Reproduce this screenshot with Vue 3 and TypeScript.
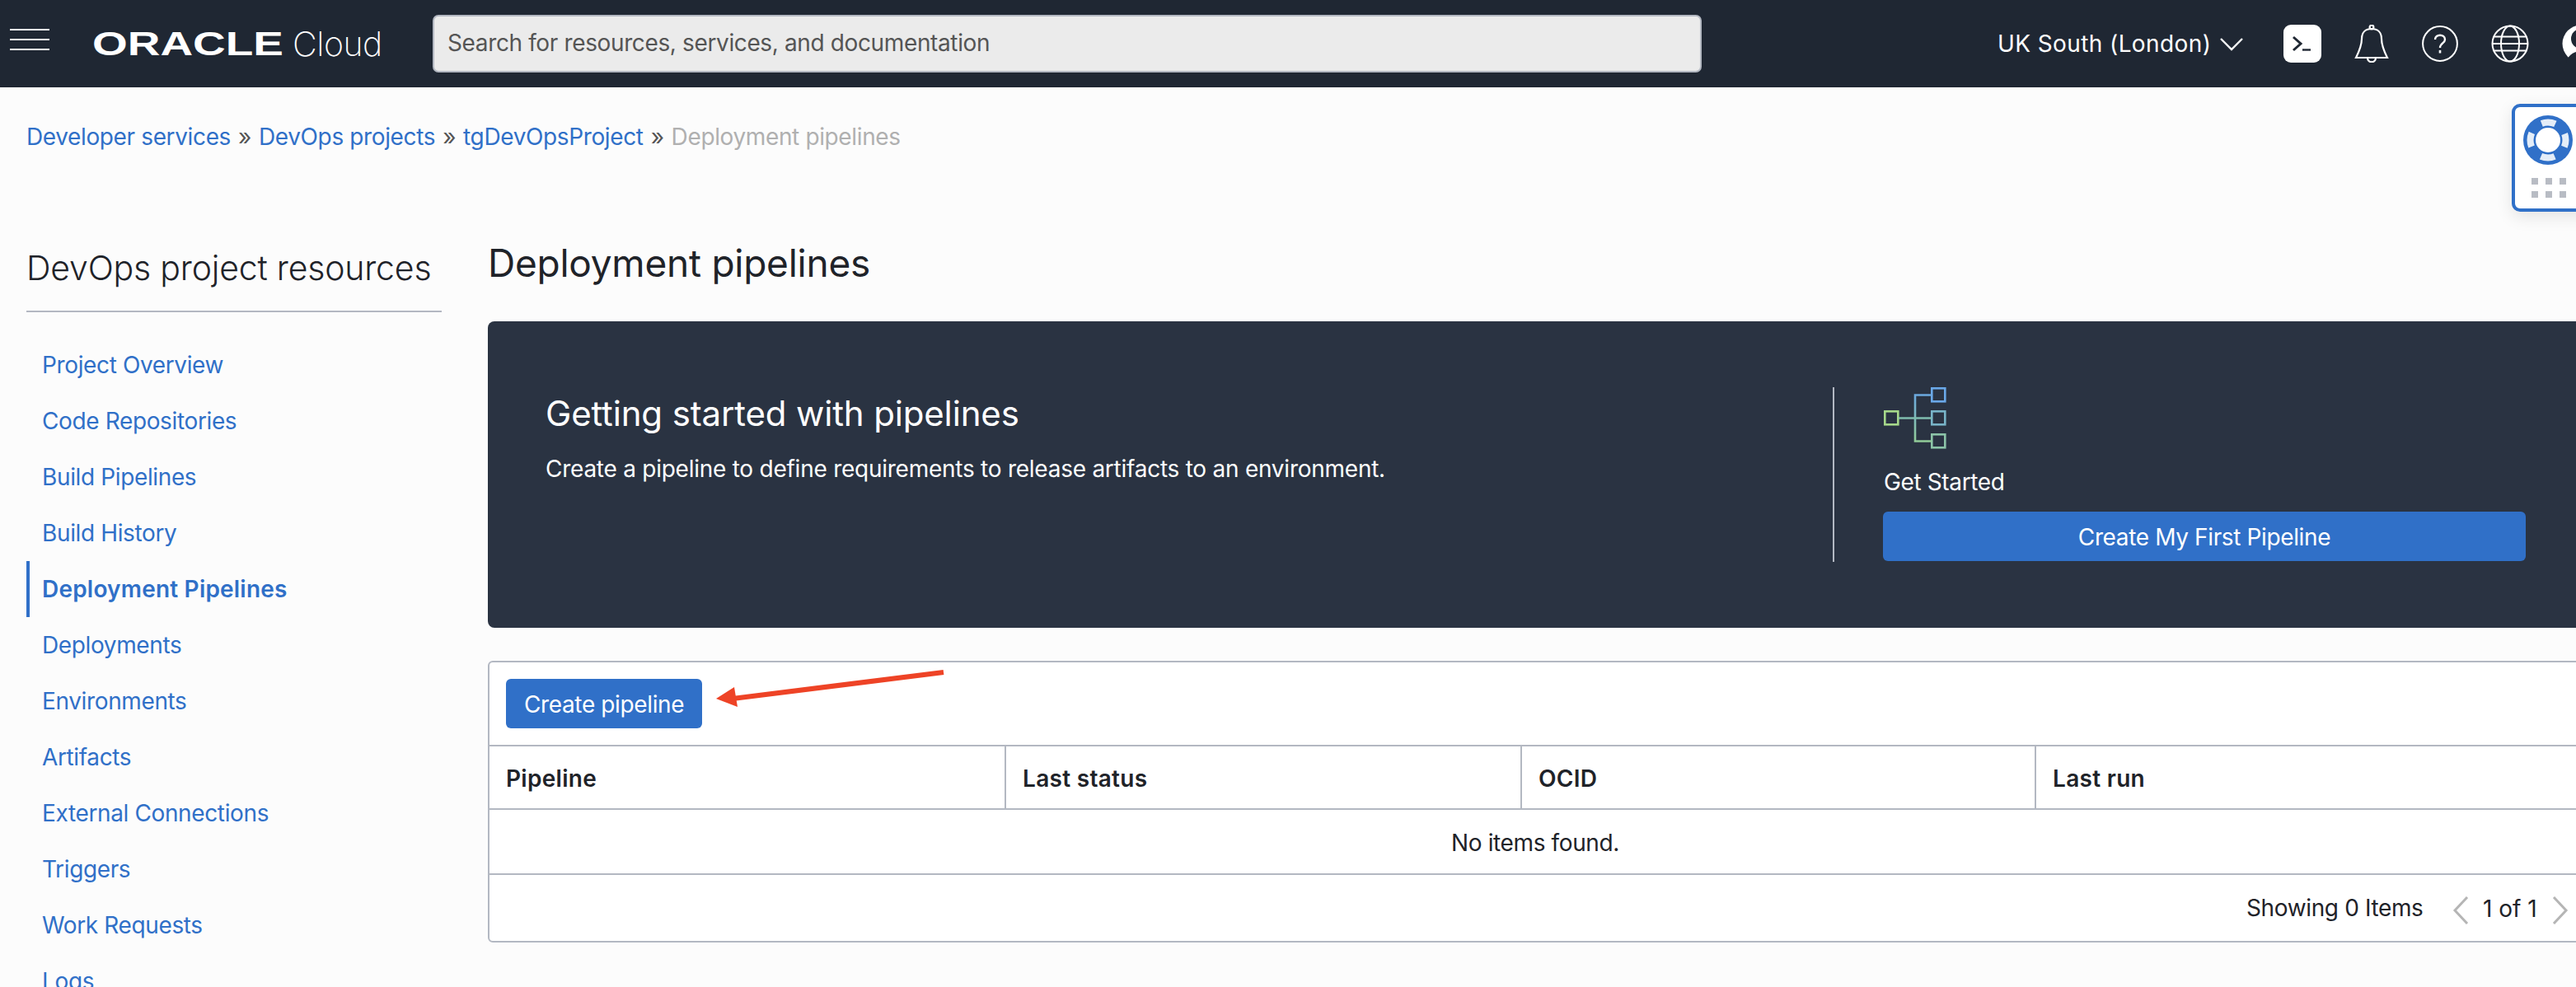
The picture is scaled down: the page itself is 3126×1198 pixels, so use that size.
<script setup lang="ts">
const crumbs = ['Developer services', 'DevOps projects', 'tgDevOpsProject']

const navItems = [
  'Project Overview',
  'Code Repositories',
  'Build Pipelines',
  'Build History',
  'Deployment Pipelines',
  'Deployments',
  'Environments',
  'Artifacts',
  'External Connections',
  'Triggers',
  'Work Requests',
  'Logs',
]
const activeNav = 'Deployment Pipelines'

const columns = ['Pipeline', 'Last status', 'OCID', 'Last run']
</script>

<template>
  <div class="page">
    <header class="topbar">
      <div class="menu-btn"><span></span><span></span><span></span></div>
      <div class="brand">
        <span class="brand-oracle">ORACLE</span>
        <span class="brand-cloud">Cloud</span>
      </div>
      <div class="search">Search for resources, services, and documentation</div>
      <div class="region">
        UK South (London)
        <svg class="region-chev" width="28" height="16" viewBox="0 0 28 16" fill="none" stroke="#fff" stroke-width="2.4"><path d="M1 1l13 13L27 1" /></svg>
      </div>
      <div class="tools">
        <svg width="46" height="46" viewBox="0 0 46 46">
          <rect width="46" height="46" rx="9" fill="#fff" />
          <path d="M12 15l9 8-9 8" fill="none" stroke="#1f2733" stroke-width="3" />
          <path d="M23 30.500h10" fill="none" stroke="#1f2733" stroke-width="2.400" />
        </svg>
        <svg width="42" height="46" viewBox="0 0 42 46" fill="none" stroke="#fff" stroke-width="2.2">
          <path d="M2 40C7 30 9 24 9 17 9 9 14 5 21 5s12 4 12 12c0 7 2 13 7 23z" />
          <circle cx="21" cy="3" r="2.400" />
          <path d="M16 40c0 7 10 7 10 0" />
        </svg>
        <svg width="44" height="44" viewBox="0 0 44 44" fill="none" stroke="#fff" stroke-width="2">
          <circle cx="22" cy="22" r="20.900" />
          <path d="M16 17c0-7 12-7 12 0 0 4.500-6 4.500-6 10" stroke-width="2.400" />
          <path d="M22 30v3.500" stroke-width="2.600" />
        </svg>
        <svg width="46" height="46" viewBox="0 0 46 46" fill="none" stroke="#fff" stroke-width="2">
          <circle cx="23" cy="23" r="21.500" />
          <ellipse cx="23" cy="23" rx="11" ry="21.500" />
          <path d="M4 14.500h38M1.500 23h43M4 31.500h38" />
        </svg>
        <svg width="46" height="46" viewBox="0 0 46 46">
          <circle cx="23" cy="23" r="22.500" fill="#fff" />
          <circle cx="23" cy="17" r="12" fill="#1f2733" />
          <ellipse cx="23" cy="48" rx="18" ry="16" fill="#1f2733" />
        </svg>
      </div>
    </header>

    <nav class="crumbs">
      <template v-for="c in crumbs" :key="c">
        <a class="crumb-link">{{ c }}</a>
        <span class="crumb-sep">»</span>
      </template>
      <span class="crumb-current">Deployment pipelines</span>
    </nav>

    <div class="body-row">
      <aside class="sidebar">
        <h2 class="side-title">DevOps project resources</h2>
        <ul class="side-nav">
          <li v-for="item in navItems" :key="item" :class="{ active: item === activeNav }">{{ item }}</li>
        </ul>
      </aside>

      <main class="main">
        <h1 class="page-title">Deployment pipelines</h1>

        <section class="banner">
          <div class="banner-left">
            <h2>Getting started with pipelines</h2>
            <p>Create a pipeline to define requirements to release artifacts to an environment.</p>
          </div>
          <div class="banner-right">
            <svg class="pipeline-icon" width="76" height="76" viewBox="0 0 76 76" fill="none" stroke-width="2.6">
              <defs>
                <linearGradient id="spine" gradientUnits="userSpaceOnUse" x1="38" y1="8" x2="38" y2="66">
                  <stop offset="0" stop-color="#6aa8e0" />
                  <stop offset="1" stop-color="#92cc98" />
                </linearGradient>
              </defs>
              <rect x="1.300" y="29.300" width="16" height="16" stroke="#a6d88a" />
              <rect x="58.300" y="1.300" width="16" height="16" stroke="#6aa8e8" />
              <rect x="58.300" y="29.300" width="16" height="16" stroke="#78b4c8" />
              <rect x="58.300" y="57.300" width="16" height="16" stroke="#8cc4a8" />
              <path d="M58 9.500H38v56h20" stroke="url(#spine)" />
              <path d="M18 37.500h40" stroke="#7fbcae" />
            </svg>
            <div class="get-started">Get Started</div>
            <button class="btn btn-wide">Create My First Pipeline</button>
          </div>
        </section>

        <section class="panel">
          <div class="panel-tools">
            <button class="btn">Create pipeline</button>
          </div>
          <div class="grid-head">
            <div v-for="col in columns" :key="col" class="grid-cell">{{ col }}</div>
          </div>
          <div class="grid-empty">No items found.</div>
          <div class="panel-foot">
            <span class="showing">Showing 0 Items</span>
            <svg class="pager-chev" width="20" height="34" viewBox="0 0 20 34" fill="none" stroke="#b5b5b5" stroke-width="3"><path d="M18 1L3 17l15 16" /></svg>
            <span class="pager-text">1 of 1</span>
            <svg class="pager-chev" width="20" height="34" viewBox="0 0 20 34" fill="none" stroke="#b5b5b5" stroke-width="3"><path d="M2 1l15 16L2 33" /></svg>
          </div>
        </section>
      </main>
    </div>

    <!-- annotation drawn on top of the screenshot -->
    <svg class="annotation" width="290" height="50" viewBox="0 0 290 50">
      <path d="M276 3L20 35" stroke="#ee4326" stroke-width="6" fill="none" />
      <path d="M0 35l22-14 4 24z" fill="#ee4326" />
    </svg>

    <div class="help-tab">
      <svg width="60" height="60" viewBox="0 0 60 60">
        <circle cx="30" cy="30" r="30" fill="#3070c8" />
        <circle cx="30" cy="30" r="21.500" fill="none" stroke="#e4edf8" stroke-width="8" stroke-dasharray="17 16.770" stroke-dashoffset="8.500" />
        <circle cx="30" cy="30" r="15" fill="#fff" />
      </svg>
      <div class="help-dots"><i></i><i></i><i></i><i></i><i></i><i></i></div>
    </div>
  </div>
</template>

<style scoped>
.page {
  position: relative;
  width: 3126px;
  height: 1198px;
  overflow: hidden;
  background: #fcfcfc;
  font-family: Inter, "Liberation Sans", sans-serif;
  font-size: 28px;
  letter-spacing: -0.37px;
  color: #1f2329;
}

.topbar {
  display: flex;
  align-items: center;
  height: 106px;
  background: #1f2733;
  color: #fff;
  padding-left: 12px;
}
.topbar > * {
  flex-shrink: 0;
}
.menu-btn {
  display: flex;
  flex-direction: column;
  gap: 10px;
  width: 48px;
  margin-top: -11px;
}
.menu-btn span {
  height: 2px;
  background: #fff;
}
.brand {
  display: flex;
  align-items: center;
  width: 413px;
  margin-left: 52px;
}
.brand-oracle {
  font-family: "Liberation Sans", sans-serif;
  font-weight: 700;
  font-size: 41px;
  letter-spacing: 0;
  width: 243px;
  transform-origin: left center;
  transform: scaleX(1.34);
  line-height: 1;
}
.brand-cloud {
  font-weight: 200;
  font-size: 41px;
  letter-spacing: -0.5px;
  line-height: 1;
}
.search {
  width: 1540px;
  height: 70px;
  box-sizing: border-box;
  display: flex;
  align-items: center;
  padding: 0 0 2px 16px;
  background: #ebebeb;
  border: 2px solid #b3b8c2;
  border-radius: 7px;
  color: #555;
}
.region {
  display: flex;
  align-items: center;
  gap: 11px;
  margin-left: 359px;
  white-space: nowrap;
  letter-spacing: 0.4px;
}
.region-chev {
  margin-top: 2px;
}
.tools {
  display: flex;
  align-items: center;
  gap: 40px;
  margin-left: 49px;
}
.tools svg {
  flex-shrink: 0;
}

.crumbs {
  display: flex;
  gap: 9px;
  padding: 42px 0 0 32px;
  height: 64px;
  line-height: 36px;
  box-sizing: content-box;
}
.crumb-link { color: #3070c8; }
.crumb-sep { color: #555; }
.crumb-current { color: #b0b0b0; }

.body-row {
  display: flex;
  padding: 80px 0 0 32px;
}
.sidebar {
  width: 504px;
  flex-shrink: 0;
}
.side-title {
  margin: 0;
  height: 85px;
  font-size: 41px;
  font-weight: 300;
  line-height: 66px;
  letter-spacing: -0.2px;
  color: #1f2329;
  border-bottom: 2px solid #b3b8c2;
  white-space: nowrap;
}
.side-nav {
  list-style: none;
  margin: 30px 0 0;
  padding: 0;
}
.side-nav li {
  height: 68px;
  line-height: 68px;
  padding-left: 19px;
  color: #3070c8;
}
.side-nav li.active {
  padding-left: 15px;
  border-left: 4px solid #3070c8;
  font-weight: 600;
  letter-spacing: 0.2px;
}

.main {
  width: 2542px;
  flex-shrink: 0;
  margin-left: 56px;
}
.page-title {
  margin: 0;
  height: 98px;
  font-size: 46px;
  font-weight: 400;
  line-height: 54px;
  letter-spacing: -0.25px;
  color: #1f2329;
}
.banner {
  display: flex;
  height: 372px;
  box-sizing: border-box;
  padding: 80px 68px 80px 70px;
  background: #2a3342;
  border-radius: 8px;
  color: #fff;
}
.banner-left {
  flex: 1;
}
.banner-left h2 {
  margin: 6px 0 0;
  font-size: 42px;
  font-weight: 400;
  line-height: 52px;
  letter-spacing: -0.15px;
}
.banner-left p {
  margin: 21px 0 0;
  line-height: 40px;
  letter-spacing: -0.25px;
}
.banner-right {
  width: 842px;
  box-sizing: border-box;
  padding-left: 60px;
  border-left: 2px solid #b3b8c2;
}
.pipeline-icon {
  display: block;
}
.get-started {
  margin-top: 19px;
  line-height: 40px;
}
.btn {
  display: block;
  height: 60px;
  padding: 2px 22px 0;
  border: 0;
  border-radius: 6px;
  background: #3070c8;
  color: #fff;
  font: inherit;
  letter-spacing: inherit;
}
.btn-wide {
  width: 780px;
  margin-top: 16px;
  margin-left: -1px;
}

.panel {
  margin-top: 40px;
  height: 342px;
  box-sizing: border-box;
  background: #fff;
  border: 2px solid #b3b8c2;
  border-radius: 6px;
}
.panel-tools {
  height: 100px;
  box-sizing: border-box;
  padding: 20px 0 0 20px;
}
.grid-head {
  display: grid;
  grid-template-columns: 625px 626px 624px 1fr;
  height: 79px;
  box-sizing: border-box;
  border-top: 2px solid #b3b8c2;
  border-bottom: 2px solid #b3b8c2;
  font-weight: 600;
  letter-spacing: 0.3px;
}
.grid-cell {
  display: flex;
  align-items: center;
  padding: 2px 0 0 20px;
  border-left: 2px solid #b3b8c2;
}
.grid-cell:first-child {
  border-left: 0;
}
.grid-empty {
  display: flex;
  align-items: center;
  justify-content: center;
  height: 79px;
  padding-top: 2px;
  box-sizing: border-box;
  border-bottom: 2px solid #b3b8c2;
}
.panel-foot {
  display: flex;
  align-items: center;
  height: 80px;
  padding-left: 2132px;
}
.showing {
  width: 250px;
  flex-shrink: 0;
  white-space: nowrap;
}
.pager-chev {
  flex-shrink: 0;
  margin-top: 6px;
}
.pager-text {
  margin: 2px 18px 0 17px;
  letter-spacing: 0;
  white-space: nowrap;
}

.annotation {
  position: absolute;
  left: 869px;
  top: 813px;
}
.help-tab {
  position: absolute;
  left: 3048px;
  top: 126px;
  width: 100px;
  height: 131px;
  box-sizing: border-box;
  padding: 10px 0 0 10px;
  background: #fff;
  border: 4px solid #3070c8;
  border-radius: 10px;
  box-shadow: 0 6px 20px rgba(0, 0, 0, 0.1);
}
.help-tab svg {
  display: block;
}
.help-dots {
  display: grid;
  grid-template-columns: repeat(3, 8px);
  gap: 8px 9px;
  margin: 16px 0 0 10px;
}
.help-dots i {
  width: 8px;
  height: 8px;
  background: #b8bcc4;
}
</style>

<style>
html, body {
  margin: 0;
  overflow: hidden;
}
</style>
